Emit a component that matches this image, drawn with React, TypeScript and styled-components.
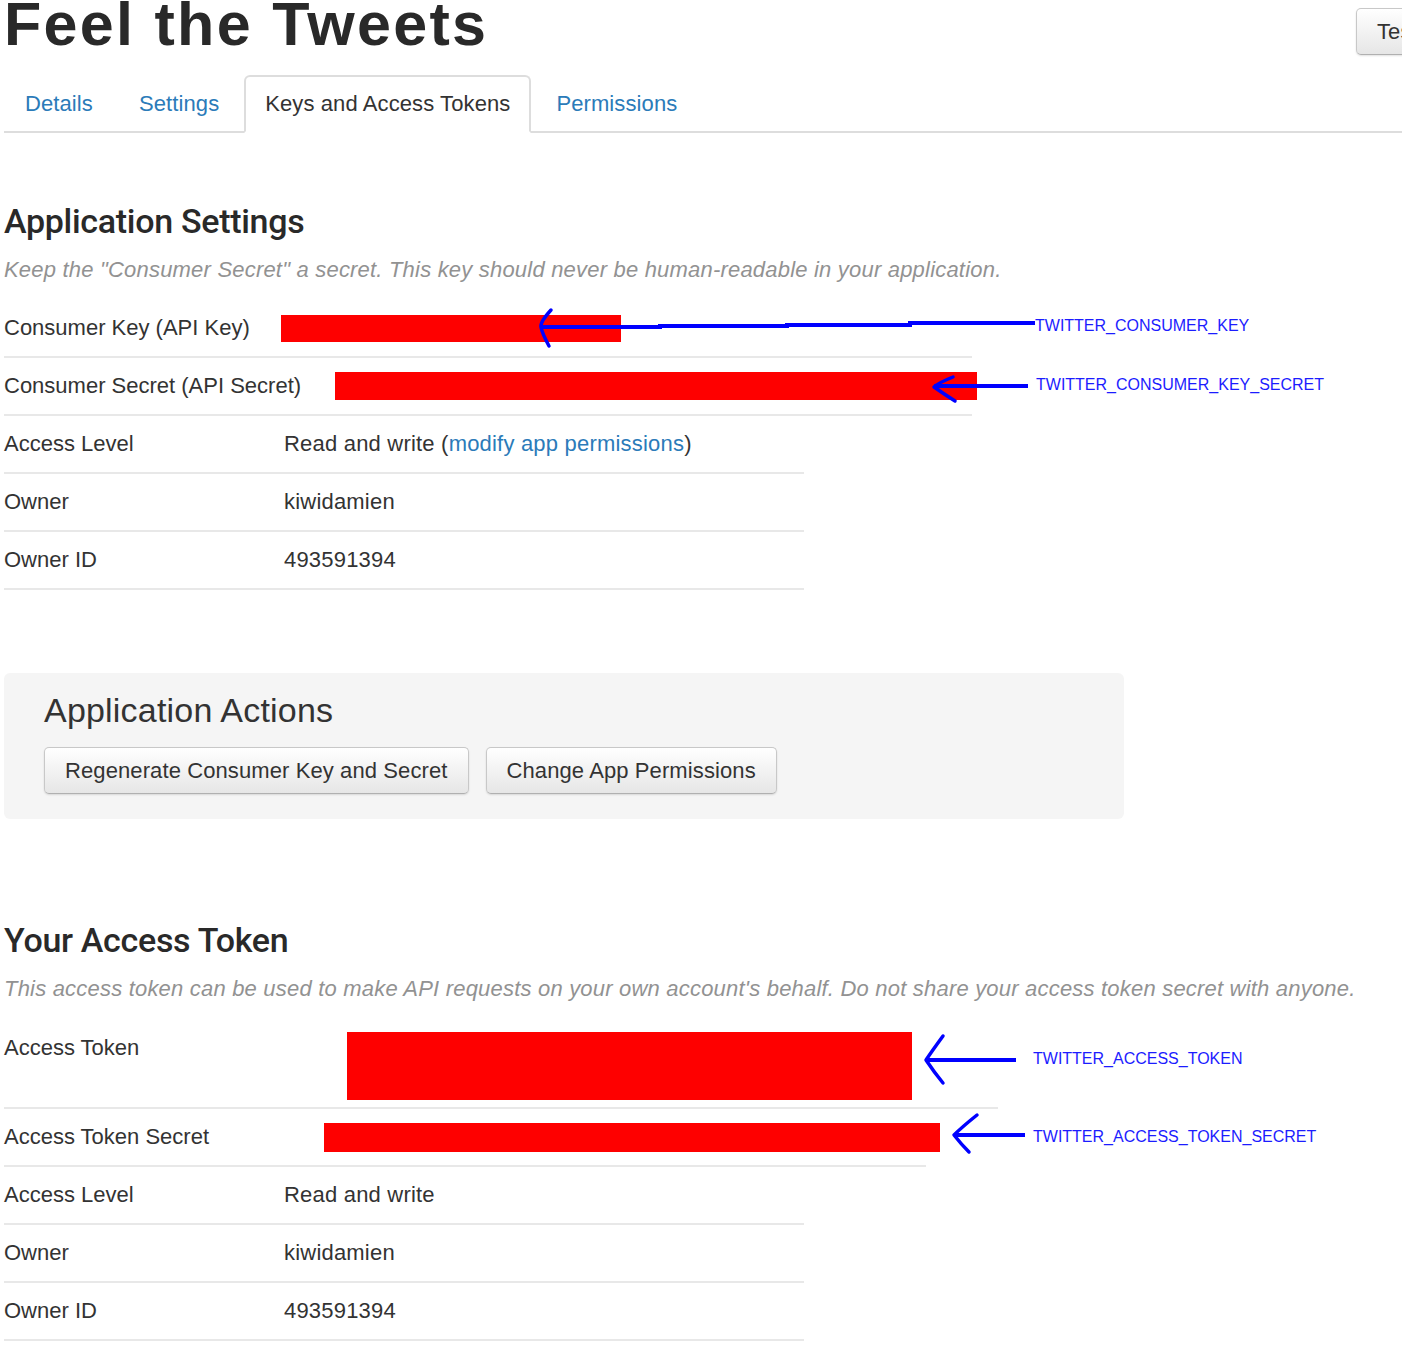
import React from "react";
import styled, { createGlobalStyle } from "styled-components";

const Global = createGlobalStyle`
  html, body { margin: 0; padding: 0; background: #ffffff; }
  body {
    font-family: "Liberation Sans", Arial, Helvetica, sans-serif;
    color: #333333;
    overflow: hidden;
  }
`;

const Page = styled.div`
  width: 1402px;
  height: 1372px;
  box-sizing: border-box;
  padding-left: 4px;
  overflow: hidden;
`;

const Header = styled.header`
  display: flex;
  justify-content: space-between;
  align-items: flex-start;
  height: 75px;
`;

const Title = styled.h1`
  margin: -6px 0 0 0;
  font-size: 61px;
  line-height: 60px;
  font-weight: 700;
  letter-spacing: 2.3px;
  color: #292929;
  white-space: nowrap;
`;

const HeaderSlot = styled.div`
  width: 46px;
  flex-shrink: 0;
  padding-top: 8px;
`;

const Button = styled.button`
  height: 47px;
  padding: 0 20px;
  font-family: "Liberation Sans", Arial, sans-serif;
  font-size: 22px;
  letter-spacing: 0.1px;
  color: #333333;
  background: linear-gradient(#ffffff, #e6e6e6);
  border: 1px solid #c8c8c8;
  border-bottom-color: #b0b0b0;
  border-radius: 5px;
  box-shadow: 0 1px 2px rgba(0, 0, 0, 0.12);
  white-space: nowrap;
  cursor: pointer;
`;

const Tabs = styled.nav`
  display: flex;
  align-items: flex-end;
  height: 56px;
  border-bottom: 2px solid #dddddd;
`;

const Tab = styled.a<{ $active?: boolean }>`
  box-sizing: border-box;
  height: 58px;
  margin-bottom: -2px;
  margin-right: 4px;
  padding: 0 19px;
  display: flex;
  align-items: center;
  font-size: 22px;
  letter-spacing: 0.1px;
  text-decoration: none;
  border: 2px solid ${(p) => (p.$active ? "#dddddd" : "transparent")};
  border-bottom-color: ${(p) => (p.$active ? "#ffffff" : "transparent")};
  border-radius: 6px 6px 0 0;
  background: ${(p) => (p.$active ? "#ffffff" : "transparent")};
  color: ${(p) => (p.$active ? "#333333" : "#2b7bb9")};
`;

const SectionTitle = styled.h2<{ $top: number }>`
  margin: ${(p) => p.$top}px 0 0 0;
  font-family: Roboto, "Liberation Sans", sans-serif;
  font-size: 34px;
  line-height: 44px;
  font-weight: 500;
  letter-spacing: -0.3px;
  color: #292929;
`;

const Lead = styled.p`
  margin: 12px 0 0 0;
  font-size: 22px;
  line-height: 30px;
  letter-spacing: 0.2px;
  font-style: italic;
  color: #929292;
  white-space: nowrap;
`;

const Table = styled.div`
  margin-top: 15px;
  display: flex;
  flex-direction: column;
  align-items: flex-start;
`;

const Row = styled.div<{ $width: number; $tall?: boolean }>`
  position: relative;
  display: flex;
  align-items: ${(p) => (p.$tall ? "flex-start" : "center")};
  width: ${(p) => p.$width}px;
  min-height: 56px;
  border-bottom: 2px solid #e8e8e8;
`;

const Label = styled.div<{ $tall?: boolean }>`
  min-width: 280px;
  flex-shrink: 0;
  font-size: 22px;
  line-height: 28px;
  color: #333333;
  white-space: nowrap;
  margin-top: ${(p) => (p.$tall ? "15px" : "0")};
`;

const Value = styled.div`
  font-size: 22px;
  line-height: 28px;
  letter-spacing: 0.2px;
  color: #333333;
  white-space: nowrap;
`;

const Link = styled.a`
  color: #2b7bb9;
  text-decoration: none;
`;

const Redacted = styled.div<{ $offset: number; $w: number; $h: number; $mt?: number; $mb?: number }>`
  flex-shrink: 0;
  margin-left: ${(p) => p.$offset}px;
  width: ${(p) => p.$w}px;
  height: ${(p) => p.$h}px;
  margin-top: ${(p) => p.$mt ?? 0}px;
  margin-bottom: ${(p) => p.$mb ?? 0}px;
  background: #fe0000;
`;

const ActionsPanel = styled.section`
  margin-top: 83px;
  width: 1120px;
  box-sizing: border-box;
  padding: 17px 40px 25px;
  background: #f5f5f5;
  border-radius: 6px;
`;

const PanelTitle = styled.h3`
  margin: 0;
  font-size: 34px;
  line-height: 41px;
  font-weight: 400;
  letter-spacing: 0.2px;
  color: #333333;
`;

const ButtonRow = styled.div`
  margin-top: 16px;
  display: flex;
  gap: 17px;
`;

const ArrowSvg = styled.svg`
  position: absolute;
  left: 0;
  top: 0;
  width: 1px;
  height: 1px;
  overflow: visible;
  pointer-events: none;
`;

const NoteLabel = styled.span<{ $x: number; $y: number }>`
  position: absolute;
  left: ${(p) => p.$x}px;
  top: ${(p) => p.$y}px;
  transform: translateY(-50%);
  font-family: "Liberation Sans", Arial, sans-serif;
  font-size: 16px;
  line-height: 18px;
  color: #1c1cff;
  white-space: nowrap;
`;

type NoteProps = {
  line: string;
  head: string;
  label: string;
  labelX: number;
  labelY: number;
};

const Note = ({ line, head, label, labelX, labelY }: NoteProps) => (
  <>
    <ArrowSvg>
      <path d={line} fill="none" stroke="#0000ff" strokeWidth={4} strokeLinecap="butt" />
      <path d={head} fill="none" stroke="#0000ff" strokeWidth={3.5} strokeLinecap="round" strokeLinejoin="round" />
    </ArrowSvg>
    <NoteLabel $x={labelX} $y={labelY}>
      {label}
    </NoteLabel>
  </>
);

const rows = (accessExtra: React.ReactNode) => [
  { label: "Access Level", value: accessExtra },
  { label: "Owner", value: "kiwidamien" },
  { label: "Owner ID", value: "493591394" },
];

export default function App() {
  const settingsRows = rows(
    <>
      Read and write (<Link href="#">modify app permissions</Link>)
    </>
  );
  const tokenRows = rows("Read and write");

  return (
    <>
      <Global />
      <Page>
        <Header>
          <Title>Feel the Tweets</Title>
          <HeaderSlot>
            <Button>Test OAuth</Button>
          </HeaderSlot>
        </Header>

        <Tabs>
          <Tab href="#">Details</Tab>
          <Tab href="#">Settings</Tab>
          <Tab href="#" $active>
            Keys and Access Tokens
          </Tab>
          <Tab href="#">Permissions</Tab>
        </Tabs>

        <SectionTitle $top={66}>Application Settings</SectionTitle>
        <Lead>Keep the "Consumer Secret" a secret. This key should never be human-readable in your application.</Lead>

        <Table>
          <Row $width={968}>
            <Label>Consumer Key (API Key)</Label>
            <Redacted $offset={-3} $w={340} $h={27} />
            <Note
              line="M 536 27 L 656 27 L 656 26 L 783 26 L 783 25 L 906 25 L 906 23 L 1031 23"
              head="M 547 10 Q 536 22 537 27 Q 538 33 545 46"
              label="TWITTER_CONSUMER_KEY"
              labelX={1031}
              labelY={26}
            />
          </Row>
          <Row $width={968}>
            <Label>Consumer Secret (API Secret)</Label>
            <Redacted $offset={34} $w={642} $h={28} />
            <Note
              line="M 930 28 L 1024 28"
              head="M 949 19 Q 934 25 930 29 Q 940 36 951 43"
              label="TWITTER_CONSUMER_KEY_SECRET"
              labelX={1032}
              labelY={27}
            />
          </Row>
          {settingsRows.map((r) => (
            <Row key={r.label} $width={800}>
              <Label>{r.label}</Label>
              <Value>{r.value}</Value>
            </Row>
          ))}
        </Table>

        <ActionsPanel>
          <PanelTitle>Application Actions</PanelTitle>
          <ButtonRow>
            <Button>Regenerate Consumer Key and Secret</Button>
            <Button>Change App Permissions</Button>
          </ButtonRow>
        </ActionsPanel>

        <SectionTitle $top={99}>Your Access Token</SectionTitle>
        <Lead>
          This access token can be used to make API requests on your own account's behalf. Do not share your access
          token secret with anyone.
        </Lead>

        <Table>
          <Row $width={994} $tall>
            <Label $tall>Access Token</Label>
            <Redacted $offset={63} $w={565} $h={68} $mt={13} $mb={7} />
            <Note
              line="M 922 41 L 1012 41"
              head="M 939 17 Q 928 32 922 41 Q 930 53 939 64"
              label="TWITTER_ACCESS_TOKEN"
              labelX={1029}
              labelY={40}
            />
          </Row>
          <Row $width={922}>
            <Label>Access Token Secret</Label>
            <Redacted $offset={40} $w={616} $h={29} />
            <Note
              line="M 950 26 L 1021 26"
              head="M 973 6 Q 958 18 950 26 Q 957 35 965 43"
              label="TWITTER_ACCESS_TOKEN_SECRET"
              labelX={1029}
              labelY={28}
            />
          </Row>
          {tokenRows.map((r) => (
            <Row key={r.label} $width={800}>
              <Label>{r.label}</Label>
              <Value>{r.value}</Value>
            </Row>
          ))}
        </Table>
      </Page>
    </>
  );
}
